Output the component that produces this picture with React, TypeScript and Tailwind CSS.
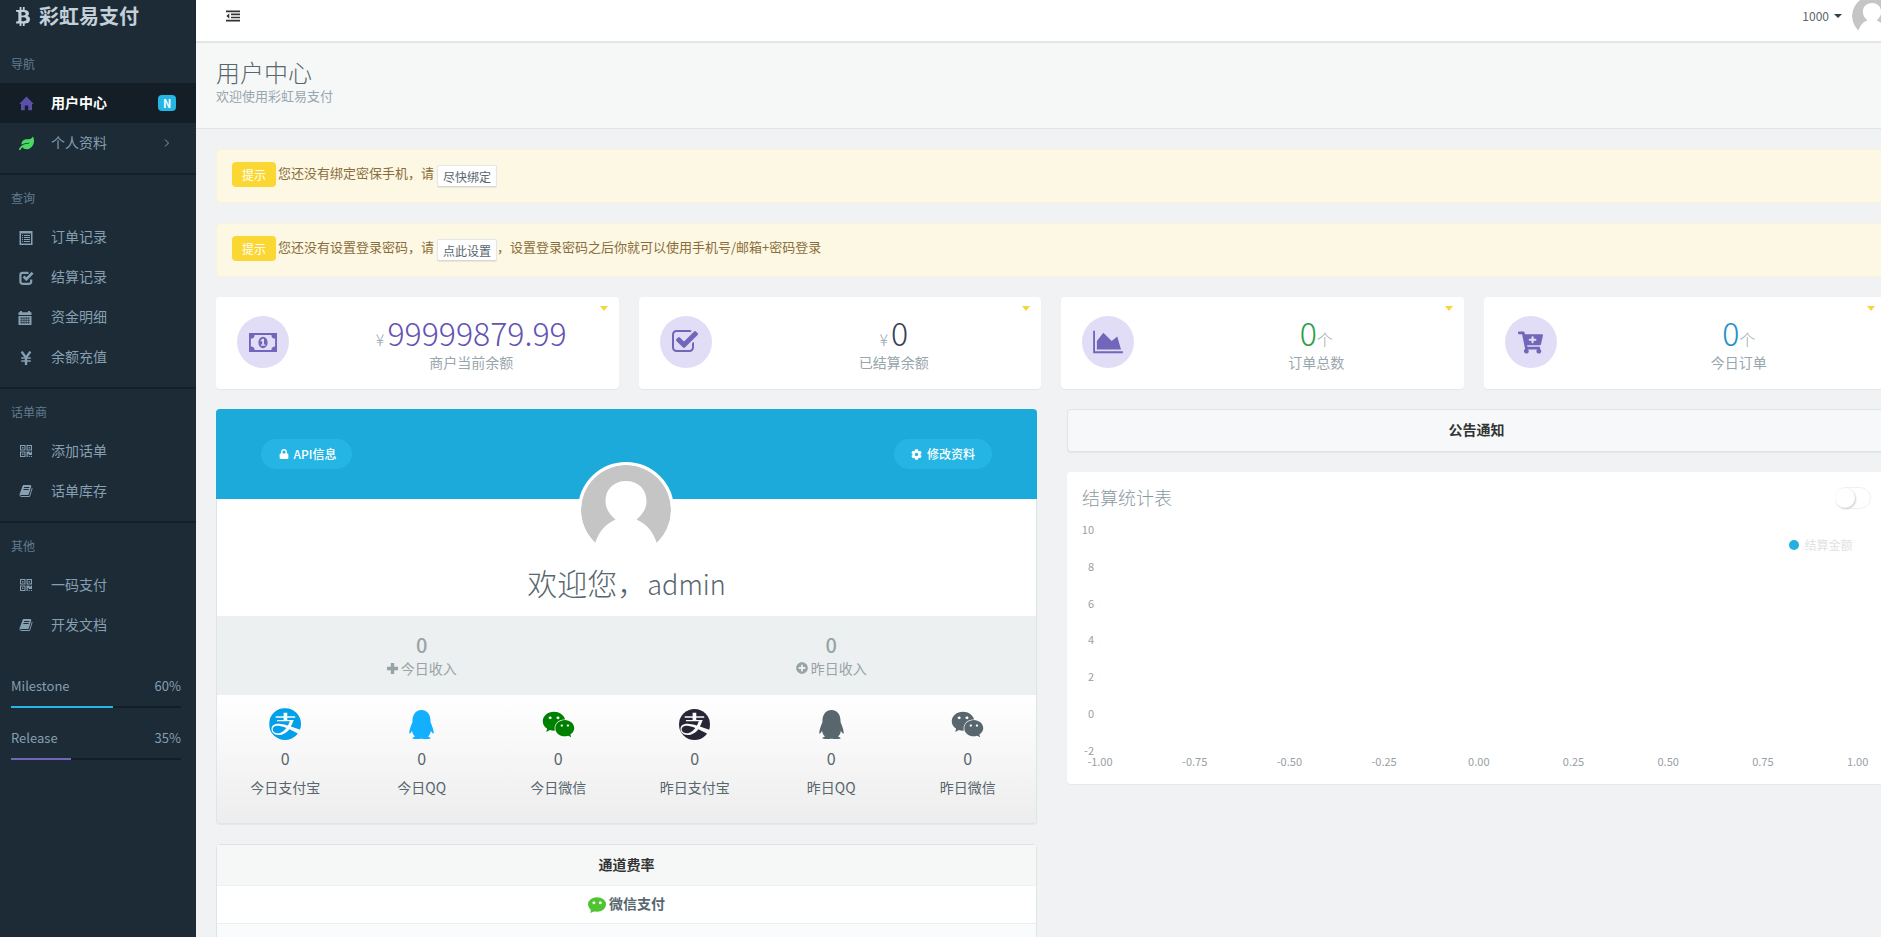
import type { ReactNode } from "react"
import {
  FaAlipay,
  FaBtc,
  FaCartPlus,
  FaCog,
  FaLeaf,
  FaLock,
  FaPlusCircle,
  FaQq,
  FaWeixin,
} from "react-icons/fa"

function HomeIcon() {
  return (
    <svg viewBox="0 0 15 15" className="h-[15px] w-[15px] fill-[#5a50a8]">
      <path d="M7.5 0.4 L14.8 8 H13 V14.3 H9.2 V9.6 H5.8 V14.3 H2 V8 H0.2 Z" />
    </svg>
  )
}

function ListIcon() {
  return (
    <svg viewBox="0 0 14 14" className="h-[14px] w-[14px] translate-y-px">
      <path
        fill="currentColor"
        fillRule="evenodd"
        d="M0.5 0H13.5V14H0.5Z M2 2.5V12.5H12V2.5Z M3 4h1v1H3z M5 4h6v1H5z M3 6h1v1H3z M5 6h6v1H5z M3 8h1v1H3z M5 8h6v1H5z M3 10h1v1H3z M5 10h6v1H5z"
      />
    </svg>
  )
}

function CheckIcon() {
  return (
    <svg viewBox="0 0 15 14" className="h-[14px] w-[15px] translate-y-px fill-none stroke-current">
      <path strokeWidth="2.2" d="M9.5 1.8H3.6Q1.4 1.8 1.4 4V10.6Q1.4 12.8 3.6 12.8H10Q12.2 12.8 12.2 10.6V8.6" />
      <path strokeWidth="2.7" d="M4.6 5.4L7.3 8.2L13.6 1.8" />
    </svg>
  )
}

function CalendarIcon() {
  return (
    <svg viewBox="0 0 14 14" className="h-[14px] w-[14px] -translate-x-px translate-y-px">
      <path
        fill="currentColor"
        d="M2 0H4V1.2H10V0H12V1.2H13.5V4H0.5V1.2H2Z M0.5 5H13.5V14H0.5Z"
      />
      <path className="stroke-[#1c2b36]" strokeWidth="0.6" d="M2 7.2H12M2 9.4H12M2 11.6H12M3.8 6V13M6 6V13M8.2 6V13M10.4 6V13" />
    </svg>
  )
}

function YenIcon() {
  return (
    <svg viewBox="0 0 12 14" className="h-[14px] w-3 translate-y-px fill-none stroke-current">
      <path strokeWidth="2.4" d="M1.6 0.6L6 6.8L10.4 0.6M6 6V14" />
      <path strokeWidth="1.4" d="M1.2 7H10.8M1.2 10H10.8" />
    </svg>
  )
}

function QrIcon() {
  return (
    <svg viewBox="0 0 12 12" className="h-3 w-3">
      <path
        fill="currentColor"
        fillRule="evenodd"
        d="M0 0H5.5V5.5H0Z M1.1 1.1V4.4H4.4V1.1Z M2.1 2.1H3.4V3.4H2.1Z M6.5 0H12V5.5H6.5Z M7.6 1.1V4.4H10.9V1.1Z M8.6 2.1H9.9V3.4H8.6Z M0 6.5H5.500V12H0Z M1.1 7.6V10.9H4.4V7.6Z M2.1 8.6H3.4V9.9H2.1Z M6.5 6.5H9.6V7.6H10.9V6.5H12V9.9H8.7V8.7H7.7V12H6.5Z M8.7 10.9H9.8V12H8.7Z M10.9 10.9H12V12H10.9Z"
      />
    </svg>
  )
}

function BookIcon() {
  return (
    <svg viewBox="0 0 1792 1792" className="h-[14px] w-[14px] fill-current">
      <path d="M1703 478q40 57 18 129l-275 906q-19 64-76.5 107.5t-122.5 43.5h-923q-77 0-148.5-53.5t-99.5-131.5q-24-67-2-127 0-4 3-27t4-37q1-8-3-21.5t-3-19.5q2-11 8-21t16.5-23.5 16.5-23.5q23-38 45-91.5t30-91.5q3-10 .5-30t-.5-28q3-11 17-28t17-23q21-36 42-92t25-90q1-9-2.5-32t.5-28q4-13 22-30.5t22-22.5q19-26 42.5-84.5t27.5-96.5q1-8-3-25.5t-2-26.5q2-8 9-18t18-23 17-21q8-12 16.5-30.5t15-35 16-36 19.5-32 26.5-23.5 36-11.5 47.5 5.5l-1 3q38-9 51-9h761q74 0 114 56t18 130l-274 906q-36 119-71.5 153.5t-128.5 34.5h-869q-27 0-38 15-11 16-1 43 24 70 144 70h923q29 0 56-15.5t35-41.5l300-987q7-22 5-57 38 15 59 43zm-1064 2q-4 13 2 22.5t20 9.5h608q13 0 25.5-9.5t16.5-22.5l21-64q4-13-2-22.5t-20-9.5h-608q-13 0-25.5 9.5t-16.5 22.5zm-83 256q-4 13 2 22.5t20 9.5h608q13 0 25.5-9.5t16.5-22.5l21-64q4-13-2-22.5t-20-9.5h-608q-13 0-25.5 9.5t-16.5 22.5z" />
    </svg>
  )
}

function OutdentIcon() {
  return (
    <svg viewBox="0 0 14 12" className="h-3 w-[14px] fill-[#333]">
      <path d="M0 0.5H14V2.2H0Z M5 3.6H14V5.2H5Z M5 6.7H14V8.3H5Z M0 9.8H14V11.5H0Z M3.3 3.2V8.7L0.4 5.95Z" />
    </svg>
  )
}

function MoneyIcon() {
  return (
    <svg viewBox="0 0 28 19" className="h-[19px] w-7">
      <path
        fill="currentColor"
        fillRule="evenodd"
        d="M0 0H28V19H0Z M5.6 1.9A3.7 3.7 0 0 1 1.9 5.6V13.4A3.7 3.7 0 0 1 5.6 17.1H22.4A3.7 3.7 0 0 1 26.1 13.4V5.6A3.7 3.7 0 0 1 22.4 1.9Z"
      />
      <ellipse cx="14" cy="9.5" rx="4.6" ry="5.8" fill="currentColor" />
      <path className="fill-[#e0dcf6]" d="M13.4 5.8H15V11.4H16.4V12.8H11.8V11.4H13.2V7.9L12.2 8.6L11.5 7.5Z" />
    </svg>
  )
}

function CheckSquareIcon() {
  return (
    <svg viewBox="0 0 1792 1792" className="h-7 w-7 fill-current">
      <path d="M1408 930v318q0 119-84.500 203.500t-203.500 84.500h-832q-119 0-203.500-84.500t-84.500-203.500v-832q0-119 84.500-203.500t203.500-84.500h832q63 0 117 25 15 7 18 23 3 17-9 29l-49 49q-10 10-23 10-3 0-9-2-23-6-45-6h-832q-66 0-113 47t-47 113v832q0 66 47 113t113 47h832q66 0 113-47t47-113v-254q0-13 9-22l64-64q10-10 23-10 6 0 12 3 20 8 20 29zm231-489l-814 814q-24 24-57 24t-57-24l-430-430q-24-24-24-57t24-57l110-110q24-24 57-24t57 24l263 263 647-647q24-24 57-24t57 24l110 110q24 24 24 57t-24 57z" />
    </svg>
  )
}

function AreaIcon() {
  return (
    <svg viewBox="0 0 2048 1792" className="h-[26px] w-[30px] fill-current">
      <path d="M2048 1536v128h-2048v-1536h128v1408h1920zm-384-1024l256 896h-1664v-576l448-576 576 576z" />
    </svg>
  )
}

function PlusIcon() {
  return (
    <svg viewBox="0 0 11 11" className="h-[11px] w-[11px] fill-current">
      <path d="M3.800 0H7.2V3.800H11V7.2H7.2V11H3.800V7.2H0V3.800H3.800Z" />
    </svg>
  )
}

function AlipayIcon({ className }: { className: string }) {
  return (
    <span className={`flex shrink-0 items-center justify-center overflow-hidden rounded-full ${className}`}>
      <FaAlipay size={37} className="shrink-0" />
    </span>
  )
}

function WechatBubble() {
  return (
    <svg viewBox="0 0 18 16" className="h-4 w-[18px]">
      <ellipse cx="9" cy="7.5" rx="9" ry="7.3" fill="#50c332" />
      <path d="M3 12L2.4 16L7 14Z" fill="#50c332" />
      <circle cx="5.9" cy="5.7" r="1.5" fill="#e8ffe0" />
      <circle cx="12.3" cy="5.7" r="1.5" fill="#e8ffe0" />
    </svg>
  )
}

function Avatar({ className }: { className: string }) {
  return (
    <svg viewBox="0 0 90 90" className={`rounded-full ${className}`}>
      <path fill="#c5c5c6" d="M14.500 78 A45 45 0 1 1 75.500 78 Z" />
      <path
        fill="#fff"
        d="M45 16 C57 16 65.500 24 65.500 36 C65.500 44 61 50 55.500 54.500 C66 59 73 68 76 79 H14 C17 68 24 59 34.500 54.500 C29 50 24.500 44 24.500 36 C24.500 24 33 16 45 16Z"
      />
    </svg>
  )
}

type NavEntry = { label: string; icon: ReactNode }

const queryNav: NavEntry[] = [
  { label: "订单记录", icon: <ListIcon /> },
  { label: "结算记录", icon: <CheckIcon /> },
  { label: "资金明细", icon: <CalendarIcon /> },
  { label: "余额充值", icon: <YenIcon /> },
]

const vendorNav: NavEntry[] = [
  { label: "添加话单", icon: <QrIcon /> },
  { label: "话单库存", icon: <BookIcon /> },
]

const otherNav: NavEntry[] = [
  { label: "一码支付", icon: <QrIcon /> },
  { label: "开发文档", icon: <BookIcon /> },
]

function NavTitle({ children }: { children: ReactNode }) {
  return <div className="mb-[10px] px-[11px] pb-0.5 text-xs leading-[15px] text-[#627c90]">{children}</div>
}

function NavItem({ label, icon, active, children }: NavEntry & { active?: boolean; children?: ReactNode }) {
  return (
    <a
      className={`flex h-10 items-center pl-[18px] pr-5 ${
        active ? "bg-[#131e26] font-bold text-white" : "text-[#869fb1]"
      }`}
    >
      <span className="flex w-4 justify-center">{icon}</span>
      <span className="ml-[17px] flex-1 pb-0.5">{label}</span>
      {children}
    </a>
  )
}

function NavSection({ title, items }: { title: string; items: NavEntry[] }) {
  return (
    <>
      <div className="mb-[15px] mt-[10px] h-[2px] bg-[#13202a]" />
      <NavTitle>{title}</NavTitle>
      {items.map((item) => (
        <NavItem key={item.label} {...item} />
      ))}
    </>
  )
}

function Progress({ label, value, color }: { label: string; value: number; color: string }) {
  return (
    <div className="mb-5 text-[13px] leading-5 text-[#869fb1]">
      <div className="flex justify-between">
        <span>{label}</span>
        <span>{value}%</span>
      </div>
      <div className="mt-[10px] h-[2px] bg-[#131e26]">
        <div className={`h-full ${color}`} style={{ width: `${value}%` }} />
      </div>
    </div>
  )
}

function Sidebar() {
  return (
    <aside className="h-full w-[196px] shrink-0 bg-[#1c2b36]">
      <div className="flex h-[33px] items-center pb-px pl-4 text-xl font-bold text-[#c3cfd9]">
        <FaBtc size={19} className="-ml-[2px] mr-[7px] w-[18px]" />
        <span className="pb-px">彩虹易支付</span>
      </div>
      <div className="pt-[23px]">
        <NavTitle>导航</NavTitle>
        <NavItem label="用户中心" icon={<HomeIcon />} active>
          <span className="flex h-4 w-[18px] items-center justify-center rounded-sm bg-[#23b7e5] text-[11px] leading-4">
            N
          </span>
        </NavItem>
        <NavItem label="个人资料" icon={<FaLeaf size={15} className="text-[#4bd964]" />}>
          <svg viewBox="0 0 6 8" className="mr-[6px] h-2 w-[6px] fill-none stroke-current">
            <path d="M1 0.5L4.5 4L1 7.5" />
          </svg>
        </NavItem>
        <NavSection title="查询" items={queryNav} />
        <NavSection title="话单商" items={vendorNav} />
        <NavSection title="其他" items={otherNav} />
      </div>
      <div className="mt-[31px] pl-[11px] pr-[15px]">
        <Progress label="Milestone" value={60} color="bg-[#23b7e5]" />
        <Progress label="Release" value={35} color="bg-[#7266ba]" />
      </div>
    </aside>
  )
}

function Alert({ text, action, rest }: { text: string; action: string; rest?: string }) {
  return (
    <div className="mb-5 flex h-[54px] items-start rounded-sm border border-[#faf2dc] bg-[#fcf8e3] pl-[15px] pt-3 text-[13px] text-[#8a6d3b]">
      <span className="flex h-[25px] w-11 items-center justify-center rounded-sm bg-[#fad733] text-xs text-white">
        提示
      </span>
      <span className="ml-[2px] leading-[22px]">{text}</span>
      <button
        type="button"
        className="ml-[3px] mt-[3px] h-[22px] w-[60px] rounded-xs border border-b-[#d4d8dc] border-[#e3e6ea] bg-white text-xs leading-[19px] text-[#58666e] shadow-[0_1px_1px_rgba(90,90,90,0.1)]"
      >
        {action}
      </button>
      {rest && <span className="leading-[22px]">{rest}</span>}
    </div>
  )
}

type Stat = {
  label: string
  value: string
  color: string
  icon: ReactNode
  prefix?: string
  suffix?: string
}

const stats: Stat[] = [
  { label: "商户当前余额", value: "99999879.99", color: "text-[#6254b2]", icon: <MoneyIcon />, prefix: "¥" },
  { label: "已结算余额", value: "0", color: "text-[#3a3f51]", icon: <CheckSquareIcon />, prefix: "¥" },
  { label: "订单总数", value: "0", color: "text-[#2e9e4f]", icon: <AreaIcon />, suffix: "个" },
  { label: "今日订单", value: "0", color: "text-[#2790c8]", icon: <FaCartPlus size={25} />, suffix: "个" },
]

function StatCard({ label, value, color, icon, prefix, suffix }: Stat) {
  return (
    <div className="relative flex h-[92px] flex-1 rounded-sm bg-white shadow-[0_1px_1px_rgba(0,0,0,0.05)]">
      <div className="ml-[21px] mt-[19px] flex h-[52px] w-[52px] items-center justify-center rounded-full bg-[#e1ddf6] text-[#7266ba]">
        {icon}
      </div>
      <div className="ml-[35px] flex-1 text-center text-[#98a6ad]">
        <div className="mt-[15px] h-10 text-base font-light leading-10">
          {prefix && <span className="mr-[3px]">{prefix}</span>}
          <span className={`text-[32px] ${color}`}>{value}</span>
          {suffix && <span>{suffix}</span>}
        </div>
        <div className="leading-5">{label}</div>
      </div>
      <svg viewBox="0 0 8 5" className="absolute right-[11px] top-[9px] h-[5px] w-2 fill-[#f5d63d]">
        <path d="M0 0H8L4 5Z" />
      </svg>
    </div>
  )
}

const channels = [
  { label: "今日支付宝", icon: <AlipayIcon className="h-8 w-8 text-[#02a0e9]" /> },
  { label: "今日QQ", icon: <FaQq size={29} className="text-[#12b0ff]" /> },
  { label: "今日微信", icon: <FaWeixin size={33} className="text-[#008000]" /> },
  { label: "昨日支付宝", icon: <AlipayIcon className="h-[31px] w-[31px] text-[#272636]" /> },
  { label: "昨日QQ", icon: <FaQq size={29} className="text-[#58666e]" /> },
  { label: "昨日微信", icon: <FaWeixin size={33} className="text-[#58666e]" /> },
]

function Income({ label, icon }: { label: string; icon: ReactNode }) {
  return (
    <div className="flex flex-1 flex-col items-center pt-[17px] text-[#98a3a6]">
      <span className="text-xl font-medium leading-6">0</span>
      <span className="flex items-center gap-[3px] leading-[22px]">
        {icon}
        {label}
      </span>
    </div>
  )
}

function ProfileCard() {
  return (
    <section className="h-[415px] rounded-sm border border-t-0 border-[#dee5e7] bg-white shadow-[0_1px_1px_rgba(0,0,0,0.05)]">
      <div className="-mx-px flex h-[90px] items-center justify-between rounded-t-sm bg-[#1caadb] px-[45px] text-xs font-medium text-white">
        <button type="button" className="flex h-[30px] w-[91px] items-center justify-center gap-[5px] rounded-full bg-[#24b5e5] pl-0.5">
          <FaLock size={10} />
          <span className="pb-px">API信息</span>
        </button>
        <button type="button" className="flex h-[30px] w-[98px] items-center justify-center gap-[5px] rounded-full bg-[#24b5e5]">
          <FaCog size={11} />
          <span className="pb-px">修改资料</span>
        </button>
      </div>
      <div className="relative flex h-[117px] justify-center pt-[60px]">
        <Avatar className="absolute -top-[37px] h-24 w-24 -translate-x-px border-[3px] border-white bg-white" />
        <h2 className="relative text-[30px] font-light leading-[46px] text-[#58666e]">
          欢迎您，<span className="text-[27px]">admin</span>
        </h2>
      </div>
      <div className="flex h-[79px] bg-[#ecf0f0]">
        <Income label="今日收入" icon={<PlusIcon />} />
        <Income label="昨日收入" icon={<FaPlusCircle size={12} />} />
      </div>
      <div className="flex h-[128px] bg-gradient-to-b from-white to-[#ededed] text-[#58666e]">
        {channels.map(({ label, icon }) => (
          <div key={label} className="flex flex-1 flex-col items-center pt-[11px]">
            <div className="flex h-9 items-center">{icon}</div>
            <span className="mt-[5px] text-base leading-[22px]">0</span>
            <span className="mt-[7px] leading-[22px]">{label}</span>
          </div>
        ))}
      </div>
    </section>
  )
}

function RatePanel() {
  return (
    <section className="mt-5 h-[200px] rounded-sm border border-[#dee5e7] bg-white">
      <div className="h-[41px] border-b border-[#edf1f2] bg-[#f6f8f8] text-center font-bold leading-[39px] text-[#333]">
        通道费率
      </div>
      <div className="flex h-[38px] items-center justify-center gap-[3px] border-b border-[#eaeff0] font-bold text-[#58666e]">
        <WechatBubble />
        <span className="pb-[3px]">微信支付</span>
      </div>
      <div className="h-20 bg-[#fafbfc]" />
    </section>
  )
}

const yTicks = [10, 8, 6, 4, 2, 0, -2]
const xTicks = ["-1.00", "-0.75", "-0.50", "-0.25", "0.00", "0.25", "0.50", "0.75", "1.00"]

function ChartPanel() {
  return (
    <section className="mt-5 h-[312px] rounded-sm bg-white shadow-[0_1px_1px_rgba(0,0,0,0.05)]">
      <div className="flex h-[45px] items-center justify-between pl-[15px] pr-[15px] pt-1">
        <h4 className="text-lg font-light text-[#8b999f]">结算统计表</h4>
        <div className="mt-0.5 h-[22px] w-9 rounded-full border border-[#eef0f2] bg-white">
          <div className="-ml-px h-5 w-5 rounded-full bg-white shadow-[1px_1px_2px_rgba(0,0,0,0.2)]" />
        </div>
      </div>
      <svg viewBox="0 -6 814 267" className="block h-[267px] w-[814px] text-[11px]">
        {yTicks.map((tick, i) => (
          <text key={tick} x="27" y={11 + i * 36.8} textAnchor="end" fill="#98a0a4">
            {tick}
          </text>
        ))}
        {xTicks.map((tick, i) => (
          <g key={tick}>
            {yTicks.map((row, j) => (
              <rect key={row} x={31 + i * 94.8} y={8 + j * 36.8} width="3" height="1" fill="#fafbfc" />
            ))}
            <text x={33 + i * 94.7} y="243" textAnchor="middle" fill="#98a0a4">
              {tick}
            </text>
          </g>
        ))}
        <circle cx="727" cy="22" r="5" fill="#23b1e0" />
        <text x="737.500" y="27" fontSize="12" fill="#dfe3e5">
          结算金额
        </text>
      </svg>
    </section>
  )
}

export default function App() {
  return (
    <div className="flex h-[937px] w-full overflow-hidden bg-[#f0f2f3] font-['Noto_Sans_CJK_SC',sans-serif] text-sm text-[#58666e]">
      <Sidebar />
      <div className="w-[1710px] shrink-0">
        <header className="relative flex h-[41px] items-center justify-between bg-white pb-[9px] shadow-[0_1px_1px_1px_rgba(0,0,0,0.07)]">
          <div className="pl-[30px]">
            <OutdentIcon />
          </div>
          <div className="flex items-center pr-[14px] text-xs">
            <span>1000</span>
            <svg viewBox="0 0 8 4" className="ml-[5px] mr-[10px] h-1 w-2 fill-[#363f44]">
              <path d="M0 0H8L4 4Z" />
            </svg>
            <Avatar className="h-10 w-10" />
          </div>
        </header>
        <div className="h-[88px] border-b border-[#dee5e7] bg-[#f6f8f8] pl-5 pt-[17px]">
          <h1 className="text-2xl font-light leading-7 text-[#58666e]">用户中心</h1>
          <p className="text-[13px] leading-[19px] text-[#98a6ad]">欢迎使用彩虹易支付</p>
        </div>
        <main className="px-5 pt-5">
          <Alert text="您还没有绑定密保手机，请" action="尽快绑定" />
          <Alert
            text="您还没有设置登录密码，请"
            action="点此设置"
            rest="，设置登录密码之后你就可以使用手机号/邮箱+密码登录"
          />
          <div className="flex gap-5">
            {stats.map((stat) => (
              <StatCard key={stat.label} {...stat} />
            ))}
          </div>
          <div className="mt-5 flex gap-[30px]">
            <div className="w-[821px]">
              <ProfileCard />
              <RatePanel />
            </div>
            <div className="flex-1">
              <section className="h-[43px] rounded-sm border border-[#dee5e7] bg-[#f6f8f9] text-center font-bold leading-[39px] text-[#333] shadow-[0_1px_1px_rgba(0,0,0,0.05)]">
                公告通知
              </section>
              <ChartPanel />
            </div>
          </div>
        </main>
      </div>
    </div>
  )
}
